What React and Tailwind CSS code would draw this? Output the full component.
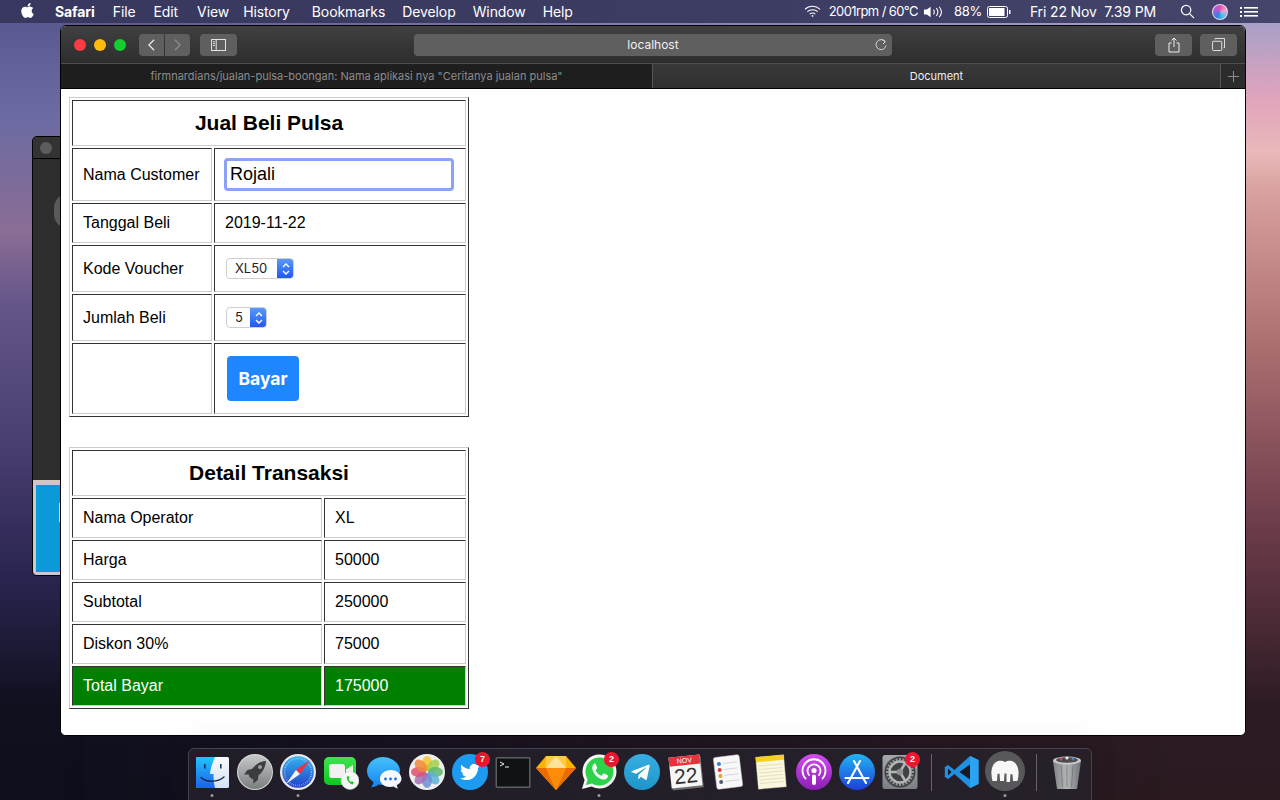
import React from "react";
import { FaApple, FaTwitter, FaTelegramPlane } from "react-icons/fa";

const sans = "font-['Liberation_Sans',Arial,sans-serif]";
const ui = "font-['Inter','Liberation_Sans',sans-serif]";
const td = "border border-t-[#333] border-l-[#333] border-r-[#ccc] border-b-[#ccc] px-[10px] py-0 text-[16px] leading-[18px] text-black text-left";
const tableCls = "border-separate border-spacing-[2px] border border-t-[#ccc] border-l-[#ccc] border-r-[#333] border-b-[#333] " + sans;

function Finder() {
  return (
    <svg viewBox="0 0 36 36" className="w-9 h-9">
      <defs>
        <linearGradient id="fl" x1="0" y1="0" x2="0" y2="1"><stop offset="0" stopColor="#22c4fb" /><stop offset="1" stopColor="#1b62ee" /></linearGradient>
        <linearGradient id="fr" x1="0" y1="0" x2="0" y2="1"><stop offset="0" stopColor="#f8fafd" /><stop offset="1" stopColor="#d2e3f5" /></linearGradient>
      </defs>
      <rect x="2" y="3" width="33" height="31" rx="1.5" fill="url(#fr)" />
      <path d="M3.5 3H21C18.5 9 16.5 14 16 20H19.5C19.4 25 20 30 21 34H3.5A1.5 1.5 0 0 1 2 32.5V4.5A1.5 1.5 0 0 1 3.5 3Z" fill="url(#fl)" />
      <rect x="10" y="10" width="1.6" height="4.5" fill="#10305e" />
      <rect x="26" y="10" width="1.6" height="4.5" fill="#2a3a55" />
      <path d="M7 23.5C12 28.5 24 28.5 30 23" fill="none" stroke="#12233f" strokeWidth="1.3" strokeLinecap="round" />
    </svg>
  );
}
function Launchpad() {
  return (
    <svg viewBox="0 0 36 36" className="w-9 h-9">
      <defs><linearGradient id="lp" x1="0" y1="0" x2="0" y2="1"><stop offset="0" stopColor="#c6c9c9" /><stop offset="1" stopColor="#7a7e7e" /></linearGradient></defs>
      <circle cx="18" cy="18" r="18" fill="#d8d8d8" />
      <circle cx="18" cy="18" r="17" fill="url(#lp)" />
      <path d="M29 7C23 7.5 18.5 10.5 15 15L10.5 16L7 20.5L12 20.5L11.8 22L14.8 25L16.2 24.8L16.3 29.5L20.8 26L21.5 21.5C26 18 28.5 13 29 7Z" fill="#3b3d3f" />
      <circle cx="23" cy="13" r="2" fill="#9a9d9e" />
    </svg>
  );
}
function Safari() {
  return (
    <svg viewBox="0 0 36 36" className="w-9 h-9">
      <defs><linearGradient id="sf" x1="0" y1="0" x2="0" y2="1"><stop offset="0" stopColor="#33b4f0" /><stop offset="1" stopColor="#2440c8" /></linearGradient></defs>
      <circle cx="18" cy="18" r="18" fill="#e8e8ea" />
      <circle cx="18" cy="18" r="15.8" fill="url(#sf)" />
      <circle cx="18" cy="18" r="13.5" fill="none" stroke="#dfe8fa" strokeWidth="1.6" strokeDasharray="0.5 1.6" />
      <polygon points="30,6 16,16 20,20" fill="#f2303c" />
      <polygon points="6,30 16,16 20,20" fill="#f2f2f2" />
    </svg>
  );
}
function FaceTime() {
  return (
    <svg viewBox="0 0 36 36" className="w-9 h-9">
      <defs><linearGradient id="ft" x1="0" y1="0" x2="0" y2="1"><stop offset="0" stopColor="#3fe44e" /><stop offset="1" stopColor="#0dc81f" /></linearGradient></defs>
      <rect x="1" y="3" width="32" height="28" rx="5" fill="url(#ft)" />
      <rect x="6" y="10" width="16" height="14" rx="3" fill="#f1f1ef" />
      <path d="M23 15.5L30 11V23L23 18.5Z" fill="#f1f1ef" />
      <circle cx="27" cy="26.5" r="9" fill="#f5f7f5" stroke="#d5d8d5" strokeWidth="0.5" />
      <path d="M24 22.5C23 24.5 25.5 29.5 29.5 30.5L31 28.5L29 27.2L28 28C26.8 27.2 25.8 26 25.5 24.9L26.5 24L25.4 21.9Z" fill="#17c526" />
    </svg>
  );
}
function Messages() {
  return (
    <svg viewBox="0 0 36 36" className="w-9 h-9">
      <defs><linearGradient id="ms" x1="0" y1="0" x2="0" y2="1"><stop offset="0" stopColor="#45c3fb" /><stop offset="1" stopColor="#1783f2" /></linearGradient></defs>
      <path d="M17 3C8 3 1 9.5 1 17C1 21.5 3.5 25.5 7.5 28C7.2 30.5 6 32 5 33.3C8 33.2 10.5 32.3 12.5 30.5C14 30.8 15.5 31 17 31C26 31 34 24.5 34 17C34 9.5 26 3 17 3Z" fill="url(#ms)" />
      <path d="M25 16C18.5 16 14 20 14 25C14 29.5 18.5 33 24 33C25.5 33 26.5 32.8 27.8 32.5C29 33.6 30.5 34.2 32 34.4C31.3 33.4 30.8 32.2 30.8 31C33.5 29.7 35.5 27.6 35.5 25C35.5 20 31 16 25 16Z" fill="#f5f8fc" />
      <circle cx="19.5" cy="25" r="1.4" fill="#1c6ee8" /><circle cx="24.5" cy="25" r="1.4" fill="#1c6ee8" /><circle cx="29.5" cy="25" r="1.4" fill="#1c6ee8" />
    </svg>
  );
}
function Photos() {
  const c = ["#f4c62e", "#a3cf4c", "#60b96f", "#5db3d9", "#6a8fd8", "#a56fb5", "#e2506f", "#f08a3a"];
  return (
    <svg viewBox="0 0 36 36" className="w-9 h-9">
      <circle cx="18" cy="18" r="18" fill="#efefef" />
      {c.map((k, i) => (
        <ellipse key={i} cx="18" cy="9.5" rx="5" ry="7.5" fill={k} fillOpacity="0.85" transform={`rotate(${i * 45} 18 18)`} />
      ))}
    </svg>
  );
}
function Round({ color, children }) {
  return <div className={"w-9 h-9 rounded-full flex items-center justify-center " + color}>{children}</div>;
}
function Terminal() {
  return (
    <svg viewBox="0 0 36 36" className="w-9 h-9">
      <rect x="0.5" y="3" width="35" height="31" rx="1.5" fill="#5c5e60" />
      <rect x="2" y="4.5" width="32" height="28" fill="#111213" />
      <path d="M5 8L9 10L5 12" fill="none" stroke="#eee" strokeWidth="1" />
      <path d="M10 13H14" stroke="#eee" strokeWidth="1" />
    </svg>
  );
}
function Sketch() {
  return (
    <svg viewBox="0 0 40 36" className="w-[40px] h-9 -mx-[2px]">
      <polygon points="10,2 30,2 40,14 20,36 0,14" fill="#fdb300" />
      <polygon points="0,14 10,14 20,36" fill="#ea6c00" />
      <polygon points="40,14 30,14 20,36" fill="#ea6c00" />
      <polygon points="10,14 30,14 20,36" fill="#fd8c0c" />
      <polygon points="10,2 20,2 10,14" fill="#fdc94a" />
      <polygon points="30,2 20,2 30,14" fill="#fdc94a" />
      <polygon points="20,2 10,14 30,14" fill="#fee29a" />
    </svg>
  );
}
function WhatsApp() {
  return (
    <svg viewBox="0 0 36 36" className="w-9 h-9">
      <path d="M18.5 0.5A17 17 0 0 1 18.5 34.5C15.5 34.5 13 33.8 10.5 32.5L1 35L3.6 26C2.3 23.5 1.5 20.8 1.5 17.5A17 17 0 0 1 18.5 0.5Z" fill="#f4f6f4" />
      <path d="M18.5 3.5A14 14 0 0 1 18.5 31.5C15.8 31.5 13.4 30.7 11 29.4L5 31L6.6 25.3C5.2 23 4.5 20.4 4.5 17.5A14 14 0 0 1 18.5 3.5Z" fill="#2bd24a" />
      <path d="M13.5 9.5C12 10.5 10.8 12.5 11.3 15C12.4 20 16.5 24.3 21.5 25.5C24 26 26 24.8 26.8 23C27.1 22.2 27 21.5 26.7 21.2L23.3 19.5C22.8 19.3 22.4 19.4 22.1 19.8L20.8 21.4C20.5 21.7 20.2 21.8 19.8 21.6C17.8 20.7 15.7 18.8 14.8 16.8C14.6 16.4 14.7 16.1 15 15.8L16 14.6C16.3 14.2 16.3 13.9 16.1 13.4L14.6 9.9C14.4 9.4 13.9 9.2 13.5 9.5Z" fill="#f7f9f7" />
    </svg>
  );
}
function Calendar() {
  return (
    <div className="relative w-9 h-9">
      <div className="absolute left-[3px] top-[2px] w-[31px] h-[31px] bg-[#f6f6f6] -rotate-[6deg] shadow-[1px_2px_0_#6e6e6e] flex flex-col">
        <div className={"h-[9px] bg-[#e5333a] text-white text-[7px] leading-[9px] text-center " + sans}>NOV</div>
        <div className={"flex-1 text-[#333] text-[21px] leading-[22px] text-center " + sans}>22</div>
      </div>
    </div>
  );
}
function Reminders() {
  return (
    <svg viewBox="0 0 36 36" className="w-9 h-9">
      <g transform="rotate(-7 18 18)">
        <rect x="5" y="2" width="26" height="32" rx="2" fill="#f8f8f8" stroke="#c8c8c8" strokeWidth="0.5" />
        <circle cx="10" cy="9" r="2" fill="#3b7de0" /><circle cx="10" cy="15" r="2" fill="#e0383a" /><circle cx="10" cy="21" r="2" fill="#f39a1e" /><circle cx="10" cy="27" r="2" fill="#555b66" />
        <path d="M14 9H28M14 15H28M14 21H28M14 27H28" stroke="#c9c9c9" strokeWidth="0.7" />
      </g>
    </svg>
  );
}
function Notes() {
  return (
    <svg viewBox="0 0 36 36" className="w-9 h-9">
      <g transform="rotate(-5 18 18)">
        <rect x="4" y="2" width="28" height="32" fill="#fbf7dc" stroke="#cfcfbf" strokeWidth="0.4" />
        <rect x="4" y="2" width="28" height="5" fill="#f6cf24" />
        <path d="M6 11H30M6 14.5H30M6 18H30M6 21.5H30M6 25H30M6 28.5H30" stroke="#d4d0b4" strokeWidth="0.6" />
      </g>
    </svg>
  );
}
function Podcasts() {
  return (
    <svg viewBox="0 0 36 36" className="w-9 h-9">
      <defs><linearGradient id="pc" x1="0" y1="0" x2="0" y2="1"><stop offset="0" stopColor="#d34cf0" /><stop offset="1" stopColor="#8a1fb5" /></linearGradient></defs>
      <circle cx="18" cy="18" r="18" fill="url(#pc)" />
      <path d="M9.5 24.5A11.5 11.5 0 1 1 26.5 24.5" fill="none" stroke="#fff" strokeWidth="1.8" strokeLinecap="round" />
      <path d="M13 21A6.5 6.5 0 1 1 23 21" fill="none" stroke="#fff" strokeWidth="1.8" strokeLinecap="round" />
      <circle cx="18" cy="16.5" r="2.6" fill="#fff" />
      <rect x="16" y="20.5" width="4" height="10.5" rx="2" fill="#fff" />
    </svg>
  );
}
function AppStore() {
  return (
    <svg viewBox="0 0 36 36" className="w-9 h-9">
      <defs><linearGradient id="as" x1="0" y1="0" x2="0" y2="1"><stop offset="0" stopColor="#20b4f5" /><stop offset="1" stopColor="#1f3fd8" /></linearGradient></defs>
      <circle cx="18" cy="18" r="18" fill="url(#as)" />
      <path d="M21 7L11 25.5M15 7L25 25.5M6.5 24H29.5M9 29L11 25.5M27 29L25 25.5" fill="none" stroke="#fff" strokeWidth="2.1" strokeLinecap="round" />
    </svg>
  );
}
function SysPrefs() {
  const spokes = [30, 150, 270];
  const teeth = Array.from({ length: 24 }, (_, i) => i * 15);
  return (
    <svg viewBox="0 0 36 36" className="w-9 h-9">
      <defs><linearGradient id="sp" x1="0" y1="0" x2="0" y2="1"><stop offset="0" stopColor="#a5a8ab" /><stop offset="1" stopColor="#7c8083" /></linearGradient></defs>
      <rect x="0.5" y="1" width="35" height="34" rx="2.5" fill="url(#sp)" />
      <circle cx="18" cy="18" r="15.5" fill="#3f4244" />
      {teeth.map((a) => <rect key={a} x="17" y="4" width="2" height="2.5" fill="#8f9192" transform={`rotate(${a} 18 18)`} />)}
      <circle cx="18" cy="18" r="10.5" fill="none" stroke="#b4b6b7" strokeWidth="2.4" />
      {spokes.map((a) => <rect key={a} x="16.7" y="8" width="2.6" height="10" fill="#b4b6b7" transform={`rotate(${a} 18 18)`} />)}
      <circle cx="18" cy="18" r="3.2" fill="#8f9192" />
    </svg>
  );
}
function VSCode() {
  return (
    <svg viewBox="0 0 36 36" className="w-9 h-9">
      <path d="M26 2L34.5 6V30L26 34L10.5 20L4 25L0.8 23V13L4 11L10.5 16L26 2Z" fill="#1f8fe0" />
      <path d="M26 2L34.5 6V30L26 34Z" fill="#2ba3f0" />
      <path d="M26 10.5L15.5 18L26 25.5Z" fill="#1a1822" />
      <path d="M4 14.5L7.5 18L4 21.5Z" fill="#1a1822" />
    </svg>
  );
}
function Mamp() {
  return (
    <svg viewBox="0 0 40 40" className="w-[40px] h-[40px] -mx-[2px] -mt-[3px] -mb-px">
      <circle cx="20" cy="20" r="20" fill="#58585a" />
      <path d="M7.5 30C5.5 23 6 14.5 11 11C14 9 17.5 9.5 20 11C22.5 9.5 26 9 29 11C34 14.5 34.5 23 32.5 30H28L27.5 23.5L25.5 23L25 31H21.5L21.5 22.5H19.5L19 30H15L14.5 22.5L12.5 23L12 30Z" fill="#f7f7f7" />
    </svg>
  );
}
function Trash() {
  return (
    <svg viewBox="0 0 36 36" className="w-9 h-9">
      <defs><linearGradient id="tr" x1="0" y1="0" x2="1" y2="0"><stop offset="0" stopColor="#7f8284" /><stop offset="0.5" stopColor="#b4b6b7" /><stop offset="1" stopColor="#6f7274" /></linearGradient></defs>
      <path d="M4 7L8 35H28L32 7Z" fill="url(#tr)" />
      <path d="M12 11L13.5 33M18 11V33M24 11L22.5 33" stroke="#6b6e70" strokeWidth="0.7" />
      <ellipse cx="18" cy="6.5" rx="14" ry="4" fill="#c8c9ca" />
      <ellipse cx="18" cy="6" rx="11" ry="2.8" fill="#4a4a4e" />
      <circle cx="12" cy="5" r="1.5" fill="#c94f4f" /><circle cx="18" cy="4" r="1.6" fill="#e8e8e8" /><circle cx="24" cy="5" r="1.5" fill="#4f7fc9" />
    </svg>
  );
}
function DockItem({ dot, badge, children }) {
  return (
    <div className="relative w-9 h-9 shrink-0">
      {children}
      {badge && (
        <span className={"absolute -top-[2px] -right-[2px] w-[15px] h-[15px] rounded-full bg-[#f0142f] text-white text-[9px] font-bold leading-[15px] text-center " + sans}>{badge}</span>
      )}
      {dot && <span className="absolute left-1/2 -translate-x-1/2 -bottom-[7px] w-[3px] h-[3px] rounded-full bg-[#9a9a9a]" />}
    </div>
  );
}
function ToolBtn({ className, children }) {
  return <div className={"h-[22px] rounded-[4px] bg-[#5f5f5f] flex items-center justify-center " + className}>{children}</div>;
}
function Sel({ label, w }) {
  return (
    <div className={"flex h-[21px] rounded-[4px] border border-[#cfcfcf] bg-white overflow-hidden ml-px " + w}>
      <div className={"flex-1 pl-2 text-[13px] leading-[19px] text-[#222] " + ui}>{label}</div>
      <div className="w-[17px] -my-px -mr-px h-[21px] bg-gradient-to-b from-[#5d9bf8] to-[#2153f2] flex items-center justify-center">
        <svg viewBox="0 0 10 16" className="w-[10px] h-[16px]" fill="none" stroke="#fff" strokeWidth="1.4"><path d="M2 6L5 3L8 6M2 10L5 13L8 10" /></svg>
      </div>
    </div>
  );
}

export default function App() {
  return (
    <div className="relative w-[1280px] h-[800px] overflow-hidden bg-[linear-gradient(180deg,#5a5a90_3%,#6c6ba2_15%,#8a6d94_29%,#64558a_38%,#4a3f72_55%,#2a2550_72%,#10101f_88%,#0e0e1c_100%)]">
      <div className="absolute inset-0 bg-[linear-gradient(180deg,#a8a0c8_3%,#e0a3bd_12%,#e9b9b9_19%,#d8a0a0_24%,#b47676_40%,#6f3d4b_65%,#2d1b24_88%,#2a1a20_100%)] [mask-image:linear-gradient(90deg,transparent_5%,black_92%)]" />

      {/* menu bar */}
      <div className={"relative h-[23px] bg-[linear-gradient(90deg,#38375f,#3d3c62_60%,#45446a)] flex items-center text-white text-[14px] leading-[23px] tracking-[-0.1px] " + ui}>
        <FaApple className="ml-[20px] w-[15px] h-[17px] mb-[2px]" />
        <span className="ml-[20px] font-bold">Safari</span>
        <span className="ml-[18px]">File</span>
        <span className="ml-[18px]">Edit</span>
        <span className="ml-[19px]">View</span>
        <span className="ml-[14px]">History</span>
        <span className="ml-[22px]">Bookmarks</span>
        <span className="ml-[17px]">Develop</span>
        <span className="ml-[17px]">Window</span>
        <span className="ml-[17px]">Help</span>
        <div className="ml-auto flex items-center mr-[22px]">
          <svg viewBox="0 0 18 13" className="w-[17px] h-[13px]" fill="none" stroke="#fff" strokeWidth="1.1"><path d="M1 4.2C5.5 0 12.5 0 17 4.2M3.5 6.7C6.5 4 11.5 4 14.5 6.7M6 9.2C7.8 7.8 10.2 7.8 12 9.2" /><circle cx="9" cy="11.2" r="0.9" fill="#fff" stroke="none" /></svg>
          <span className="ml-[8px] text-[13px] tracking-[-0.6px]">2001rpm / 60°C</span>
          <svg viewBox="0 0 22 14" className="ml-[5px] w-[21px] h-[14px]" fill="none" stroke="#fff" strokeWidth="1.1"><path d="M1 4.5H4L8 1.5V12.5L4 9.5H1Z" fill="#fff" stroke="none" /><path d="M11 4.5C12 6 12 8 11 9.5M14 3C16 5.5 16 8.5 14 11M17 1.5C20 5 20 9 17 12.5" /></svg>
          <span className="ml-[10px] text-[13px] tracking-[-0.3px]">88%</span>
          <svg viewBox="0 0 24 12" className="ml-[5px] w-[24px] h-[12px]"><rect x="0.5" y="0.5" width="20" height="11" rx="2" fill="none" stroke="#fff" /><rect x="2" y="2" width="15.5" height="8" fill="#fff" /><rect x="22" y="4" width="1.5" height="4" fill="#fff" /></svg>
          <span className="ml-[19px] whitespace-pre tracking-[-0.14px]">Fri 22 Nov  7.39 PM</span>
          <svg viewBox="0 0 16 16" className="ml-[24px] w-[15px] h-[15px]" fill="none" stroke="#fff" strokeWidth="1.3"><circle cx="6.5" cy="6.5" r="5" /><path d="M10.2 10.2L15 15" /></svg>
          <div className="ml-[17px] w-[16px] h-[16px] rounded-full bg-[conic-gradient(#e04fb0,#f0a0d0,#50c0f0,#3080e0,#a060e0,#e04fb0)] border border-white/70" />
          <svg viewBox="0 0 18 12" className="ml-[12px] w-[18px] h-[12px]" fill="#fff"><rect x="0" y="1" width="2" height="2" /><rect x="0" y="5" width="2" height="2" /><rect x="0" y="9" width="2" height="2" /><rect x="4" y="1" width="14" height="1.6" /><rect x="4" y="5" width="14" height="1.6" /><rect x="4" y="9" width="14" height="1.6" /></svg>
        </div>
      </div>

      {/* window behind */}
      <div className="absolute left-[32px] top-[136px] w-[40px] h-[440px] rounded-[5px] border border-black bg-[#2d2d2d] overflow-hidden">
        <div className="h-[22px] bg-[#333] border-b border-black flex items-center pl-[7px]">
          <div className="w-[12px] h-[12px] rounded-full bg-[#5c5c5c]" />
        </div>
        <div className="absolute left-[21px] top-[56px] w-[30px] h-[36px] rounded-full bg-[#5a5a5a]" />
        <div className="absolute left-0 right-0 top-[343px] bottom-0 bg-[#c9c9c9] pl-[3px] pt-[5px] pb-[3px]">
          <div className="relative h-full bg-[#0a9ad8]">
            <div className="absolute left-[23px] top-[18px] w-[5px] h-[19px] bg-[#cfd8dc]" />
          </div>
        </div>
      </div>

      {/* Safari window */}
      <div className="absolute left-[60px] top-[25px] w-[1186px] h-[711px] rounded-[6px] border border-black overflow-hidden bg-white flex flex-col">
        <div className="h-[38px] shrink-0 bg-gradient-to-b from-[#404040] to-[#2d2d2d] border-b border-[#4d4d4d] flex items-center relative">
          <div className="ml-[13px] w-3 h-3 rounded-full bg-[#fc3c44]" />
          <div className="ml-2 w-3 h-3 rounded-full bg-[#fdbb0c]" />
          <div className="ml-2 w-3 h-3 rounded-full bg-[#15cd2e]" />
          <ToolBtn className="ml-[13px] w-[25px] rounded-r-none">
            <svg viewBox="0 0 10 16" className="w-[9px] h-[14px]" fill="none" stroke="#e8e8e8" strokeWidth="1.4"><path d="M8 2L2 8L8 14" /></svg>
          </ToolBtn>
          <ToolBtn className="ml-px w-[25px] rounded-l-none">
            <svg viewBox="0 0 10 16" className="w-[9px] h-[14px]" fill="none" stroke="#8d8d8d" strokeWidth="1.4"><path d="M2 2L8 8L2 14" /></svg>
          </ToolBtn>
          <ToolBtn className="ml-[10px] w-[37px]">
            <svg viewBox="0 0 16 13" className="w-[15px] h-[12px]" fill="none" stroke="#eee" strokeWidth="1"><rect x="0.5" y="0.5" width="15" height="12" /><path d="M5.5 0.5V12.5" /><path d="M2 3H4M2 5H4M2 7H4" /></svg>
          </ToolBtn>
          <ToolBtn className={"relative ml-[177px] w-[478px] text-[#f0f0f0] text-[12px] pt-px " + ui}>
            <span>localhost</span>
            <svg viewBox="0 0 14 14" className="absolute right-[4px] top-[4px] w-[14px] h-[14px]" fill="none" stroke="#d5d5d5" strokeWidth="1"><path d="M11 3.5A5 5 0 1 0 12 7.5" /><path d="M8 1.5L11.5 3.5L9 6" /></svg>
          </ToolBtn>
          <ToolBtn className="ml-auto w-[37px]">
            <svg viewBox="0 0 12 16" className="w-[12px] h-[16px]" fill="none" stroke="#eee" strokeWidth="1"><path d="M3.5 6H1V15H11V6H8.5" /><path d="M6 10V1M3.5 3.5L6 1L8.5 3.5" /></svg>
          </ToolBtn>
          <ToolBtn className="ml-2 mr-2 w-[37px]">
            <svg viewBox="0 0 14 14" className="w-[13px] h-[13px]" fill="none" stroke="#eee" strokeWidth="1"><rect x="0.5" y="3.5" width="10" height="10" rx="1" /><path d="M3.5 1.5V0.5H13.5V10.5H12.5" /></svg>
          </ToolBtn>
        </div>
        <div className={"h-[25px] shrink-0 flex border-b border-black text-[11px] leading-[24px] text-center " + ui}>
          <div className="w-[591px] bg-[#1e1e1e] text-[#8c8c8c]">firmnardians/jualan-pulsa-boongan: Nama aplikasi nya "Ceritanya jualan pulsa"</div>
          <div className="flex-1 bg-gradient-to-b from-[#383838] to-[#303030] border-l border-[#555] text-[#eee]">Document</div>
          <div className="w-[25px] bg-[#2c2c2c] border-l border-[#555] flex items-center justify-center">
            <svg viewBox="0 0 11 11" className="w-[11px] h-[11px]" stroke="#8d8d8d" strokeWidth="1"><path d="M5.5 0V11M0 5.5H11" /></svg>
          </div>
        </div>

        {/* page */}
        <div className="flex-1 pl-2 pt-2 bg-white">
          <table className={tableCls + " w-[400px]"}>
            <tbody>
              <tr><th colSpan={2} className={td + " h-[46px] !text-[21px] font-bold !text-center !leading-[24px]"}>Jual Beli Pulsa</th></tr>
              <tr>
                <td className={td + " w-[140px] h-[53px]"}>Nama Customer</td>
                <td className={td}>
                  <input readOnly value="Rojali" className={"block -ml-px w-[230px] h-[33px] border-[3px] border-[#8aa3f4] rounded-[4px] pl-[3px] text-[18px] text-black outline-none " + sans} />
                </td>
              </tr>
              <tr><td className={td + " h-[40px]"}>Tanggal Beli</td><td className={td}>2019-11-22</td></tr>
              <tr><td className={td + " h-[47px]"}>Kode Voucher</td><td className={td}><Sel label="XL50" w="w-[68px]" /></td></tr>
              <tr><td className={td + " h-[47px]"}>Jumlah Beli</td><td className={td}><Sel label="5" w="w-[41px]" /></td></tr>
              <tr>
                <td className={td + " h-[71px]"}></td>
                <td className={td}>
                  <button className={"block ml-[2px] w-[72px] h-[45px] rounded-[4px] bg-[#1e87ff] text-white text-[17.5px] font-bold " + ui}>Bayar</button>
                </td>
              </tr>
            </tbody>
          </table>
          <table className={tableCls + " w-[400px] mt-[30px]"}>
            <tbody>
              <tr><th colSpan={2} className={td + " h-[46px] !text-[21px] font-bold !text-center !leading-[24px]"}>Detail Transaksi</th></tr>
              <tr><td className={td + " w-[250px] h-[40px]"}>Nama Operator</td><td className={td}>XL</td></tr>
              <tr><td className={td + " h-[40px]"}>Harga</td><td className={td}>50000</td></tr>
              <tr><td className={td + " h-[40px]"}>Subtotal</td><td className={td}>250000</td></tr>
              <tr><td className={td + " h-[40px]"}>Diskon 30%</td><td className={td}>75000</td></tr>
              <tr>
                <td className={td + " h-[40px] !bg-[#008000] !text-white"}>Total Bayar</td>
                <td className={td + " !bg-[#008000] !text-white"}>175000</td>
              </tr>
            </tbody>
          </table>
        </div>
      </div>

      {/* dock */}
      <div className="absolute left-[188px] top-[748px] w-[904px] h-[60px] rounded-t-[6px] border border-[#45434f] bg-[#26242e]/70 shadow-[0_-4px_30px_rgba(0,0,0,0.1)] flex items-start pt-[5px] pl-[5px] gap-[7px]">
        <DockItem dot><Finder /></DockItem>
        <DockItem><Launchpad /></DockItem>
        <DockItem dot><Safari /></DockItem>
        <DockItem><FaceTime /></DockItem>
        <DockItem><Messages /></DockItem>
        <DockItem><Photos /></DockItem>
        <DockItem badge="7"><Round color="bg-[#1d9bf0]"><FaTwitter className="w-[20px] h-[20px] text-white" /></Round></DockItem>
        <DockItem><Terminal /></DockItem>
        <DockItem><Sketch /></DockItem>
        <DockItem dot badge="2"><WhatsApp /></DockItem>
        <DockItem><Round color="bg-gradient-to-b from-[#37aee2] to-[#1e96c8]"><FaTelegramPlane className="w-[21px] h-[21px] text-white mr-[3px]" /></Round></DockItem>
        <DockItem><Calendar /></DockItem>
        <DockItem><Reminders /></DockItem>
        <DockItem><Notes /></DockItem>
        <DockItem><Podcasts /></DockItem>
        <DockItem><AppStore /></DockItem>
        <DockItem badge="2"><SysPrefs /></DockItem>
        <div className="ml-[6px] w-px h-[37px] bg-white/30" />
        <div className="ml-[5px]"><DockItem><VSCode /></DockItem></div>
        <DockItem dot><Mamp /></DockItem>
        <div className="ml-[6px] w-px h-[37px] bg-white/30" />
        <div className="ml-[5px]"><DockItem><Trash /></DockItem></div>
      </div>
    </div>
  );
}
